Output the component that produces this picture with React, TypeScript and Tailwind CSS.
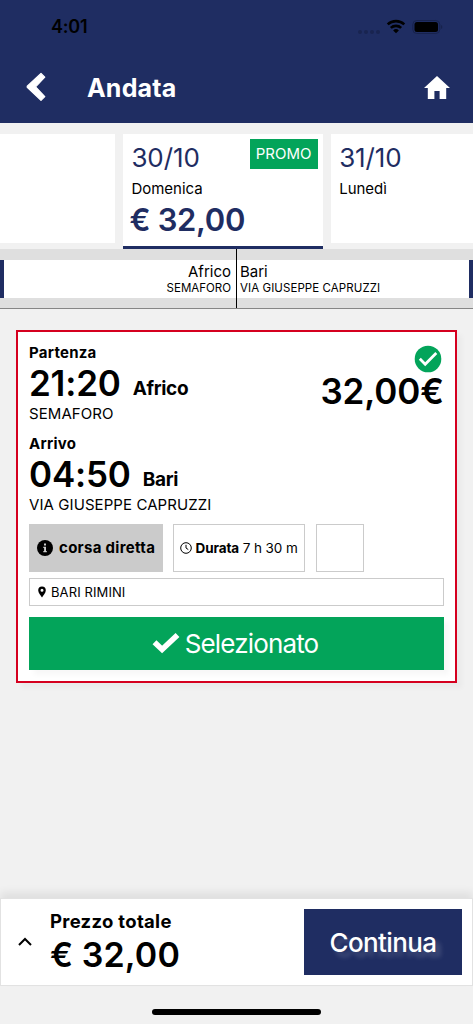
import { FC, ReactNode } from "react";
import clsx from "clsx";

interface StopProps {
  label: string;
  time: string;
  city: string;
  address: string;
  className?: string;
}

const Stop: FC<StopProps> = ({ label, time, city, address, className }) => {
  return (
    <div className={className}>
      <h3 className="text-[15px] leading-[19px] font-bold tracking-[0.25px]">{label}</h3>
      <div className="flex items-baseline gap-[12px] h-[42px] leading-[42px]">
        <span className="text-[35px] font-semibold tracking-[-0.2px]">{time}</span>
        <span className="relative -top-px text-[19px] font-bold tracking-[-0.3px]">{city}</span>
      </div>
      <p className="text-[15px] leading-[19px] tracking-[0.08px]">{address}</p>
    </div>
  );
};

interface DayProps {
  date?: string;
  day?: string;
  className?: string;
  children?: ReactNode;
}

const Day: FC<DayProps> = ({ date, day, className, children }) => {
  return (
    <div className={clsx("relative bg-white pt-[7px] pl-2", className)}>
      <h2 className="text-[26px] leading-[34px] tracking-[-0.1px] text-[#1f2d62]">{date}</h2>
      <p className="text-[15px] leading-[27px]">{day}</p>
      {children}
    </div>
  );
};

const StatusBar = () => {
  return (
    <div className="flex items-center justify-between h-[54px] pl-[51px] pr-[30px] text-black">
      <span className="text-[18px] font-semibold leading-[54px] tracking-[-0.2px]">4:01</span>
      <svg width="86" height="16" viewBox="0 0 86 16">
        <g fill="#192450">
          <circle cx="3" cy="13" r="2" />
          <circle cx="9" cy="13" r="2" />
          <circle cx="15" cy="13" r="2" />
          <circle cx="21" cy="13" r="2" />
        </g>
        <g fill="none" stroke="#000" strokeWidth="2.6">
          <path d="M30.7 5.4a12.2 12.2 0 0 1 16.6 0" />
          <path d="M33.8 8.9a7.6 7.6 0 0 1 10.4 0" />
        </g>
        <path d="M39 14.3l-2.9-2.9a4.2 4.2 0 0 1 5.8 0z" fill="#000" />
        <rect x="55.8" y="1.5" width="27" height="13" rx="4" fill="none" stroke="#17224c" />
        <rect x="57.5" y="3" width="23.5" height="10" rx="2.5" fill="#000" />
        <path d="M84 6c1.8.8 1.8 3.2 0 4z" fill="#17224c" />
      </svg>
    </div>
  );
};

const App: FC = () => {
  return (
    <div className="w-[473px] h-[1024px] flex flex-col bg-[#f1f1f1] text-black overflow-hidden font-['Inter','Liberation_Sans',sans-serif]">
      <header className="h-[123px] shrink-0 bg-[#1f2d62] text-white">
        <StatusBar />
        <div className="flex items-center h-[68px] pl-[26px] pr-[23px]">
          <svg width="20" height="30" viewBox="0 0 20 30" className="-mt-[3px]">
            <path
              d="M15 1.4L1.2 14.3v1L15 28.4l3.8-3.8L9.6 14.8 18.8 5.2z"
              fill="#fff"
              stroke="#fff"
              strokeWidth="1.2"
              strokeLinejoin="round"
            />
          </svg>
          <h1 className="ml-[41px] text-[25px] leading-[68px] font-bold tracking-[0.2px]">Andata</h1>
          <svg width="26" height="24" viewBox="0 0 26 24" className="ml-auto">
            <path d="M13 0L0 12h3.8v11h6.6v-8h5.2v8h6.6V12H26z" fill="#fff" />
          </svg>
        </div>
      </header>

      <div className="flex items-start shrink-0 h-[126px] pt-[11px]">
        <Day className="w-[115px] h-[109px]" />
        <Day
          date="30/10"
          day="Domenica"
          className="ml-[8.5px] w-[199.5px] h-[115px] border-b-3 border-[#1f2d62]"
        >
          <p className="-ml-0.5 text-[31px] leading-[35px] font-semibold tracking-[-0.3px] text-[#1f2d62]">
            € 32,00
          </p>
          <span className="absolute top-[5px] right-[5px] w-[68px] h-[30px] bg-[#03a45a] text-white text-[15px] leading-[30px] text-center">
            PROMO
          </span>
        </Day>
        <Day date="31/10" day="Lunedì" className="ml-[8.5px] w-[142px] h-[109px]" />
      </div>

      <div className="flex shrink-0 h-[60px] bg-[#dfdfdf] border-b border-[#868686]">
        <div className="flex-1 border-r border-black py-[11px]">
          <div className="h-[38px] bg-white border-l-4 border-[#1f2d62] text-right pr-[5px] pt-[2px]">
            <p className="text-[15px] leading-[19px]">Africo</p>
            <p className="text-[11.5px] leading-[15px]">SEMAFORO</p>
          </div>
        </div>
        <div className="flex-1 py-[11px]">
          <div className="h-[38px] bg-white border-r-4 border-[#1f2d62] pl-[3px] pt-[2px]">
            <p className="text-[15px] leading-[19px]">Bari</p>
            <p className="text-[11.5px] leading-[15px] tracking-[0.08px]">VIA GIUSEPPE CAPRUZZI</p>
          </div>
        </div>
      </div>

      <section className="relative mt-[21px] ml-4 w-[441px] h-[352.5px] shrink-0 bg-white border-[2px] border-[#d5001f] px-[11px] pt-[11px] shadow-[5px_5px_5px_rgba(0,0,0,0.03)]">
        <Stop label="Partenza" time="21:20" city="Africo" address="SEMAFORO" />
        <Stop
          label="Arrivo"
          time="04:50"
          city="Bari"
          address="VIA GIUSEPPE CAPRUZZI"
          className="mt-[11px]"
        />
        <div className="absolute top-[13px] right-[12px] flex flex-col items-end">
          <svg width="28" height="28" viewBox="0 0 28 28" className="mr-[1px]">
            <circle cx="14" cy="14" r="13.3" fill="#03a45a" />
            <path d="M5.8 13.8l5.4 5.4L22.3 8" fill="none" stroke="#fff" strokeWidth="2.8" />
          </svg>
          <span className="-mr-px text-[35px] leading-[36px] font-semibold tracking-[-0.1px]">
            32,00€
          </span>
        </div>

        <div className="flex mt-[10px] h-12 gap-[10.5px]">
          <div className="flex items-center w-[133.5px] pl-2 bg-[#cbcbcb]">
            <svg width="16" height="16" viewBox="0 0 16 16" className="mr-[6px]">
              <circle cx="8" cy="8" r="8" fill="#000" />
              <path d="M7 3.5h2v2H7zM6.3 6.8H9v4.3h.8v1.2H6.3v-1.2h.8V8h-.8z" fill="#cbcbcb" />
            </svg>
            <span className="text-[15px] font-bold whitespace-nowrap tracking-[0.3px]">
              corsa diretta
            </span>
          </div>
          <div className="flex items-center w-[132px] pl-[6px] border border-[#cbcbcb] text-[13.5px] tracking-[-0.1px] whitespace-nowrap">
            <svg width="12" height="12" viewBox="0 0 12 12" className="mr-[3.5px]" fill="none" stroke="#000">
              <circle cx="6" cy="6" r="5.3" />
              <path d="M6 2.8V6l2.3 1.6" />
            </svg>
            <span>
              <b className="font-bold">Durata</b> 7 h 30 m
            </span>
          </div>
          <div className="w-12 border border-[#cbcbcb]" />
        </div>

        <div className="flex items-center mt-[6px] h-[28px] pl-2 border border-[#cbcbcb]">
          <svg width="8" height="12" viewBox="0 0 8 12" className="mr-[5px]">
            <path
              d="M4 .4a3.8 3.8 0 0 0-3.8 3.8C.2 6.8 2.6 9 4 11.5 5.4 9 7.8 6.8 7.8 4.2A3.8 3.8 0 0 0 4 .4zm0 2.3a1.5 1.5 0 1 1 0 3 1.5 1.5 0 0 1 0-3z"
              fill="#000"
            />
          </svg>
          <span className="text-[13px] leading-[28px] tracking-[0.1px]">BARI RIMINI</span>
        </div>

        <button className="flex items-center justify-center mt-[11px] w-full h-[53px] bg-[#03a45a] text-white shadow-[5px_5px_5px_rgba(0,0,0,0.03)]">
          <svg width="28" height="22" viewBox="0 0 28 22" className="-ml-[3px] mr-[5px] -mt-0.5">
            <path d="M2.5 10.2l7.6 7.3L25.5 3" fill="none" stroke="#fff" strokeWidth="5.6" />
          </svg>
          <span className="text-[26px] tracking-[-0.85px]">Selezionato</span>
        </button>
      </section>

      <footer className="mt-auto h-[126px] shrink-0">
        <div className="flex h-[88px] bg-white border border-[#e2e2e2] shadow-[0_-6px_8px_rgba(0,0,0,0.07)]">
          <svg width="14" height="9" viewBox="0 0 14 9" className="ml-[17px] mt-[38px]">
            <path d="M1 8l6-6 6 6" fill="none" stroke="#000" strokeWidth="2" />
          </svg>
          <div className="ml-[18px] pt-[10px]">
            <p className="text-[18.5px] leading-[25px] font-bold tracking-[0.3px]">Prezzo totale</p>
            <p className="text-[34px] leading-[41px] font-semibold tracking-[0.1px]">€ 32,00</p>
          </div>
          <button className="ml-auto mr-[10px] mt-[10px] w-[158px] h-[66px] bg-[#1f2d62] text-white text-[26px] font-medium tracking-[-0.6px] [text-shadow:5px_5px_5px_rgba(255,255,255,0.2)]">
            Continua
          </button>
        </div>
        <div className="mx-auto mt-[23px] w-[169px] h-[6px] rounded-full bg-black" />
      </footer>
    </div>
  );
};

export default App;
